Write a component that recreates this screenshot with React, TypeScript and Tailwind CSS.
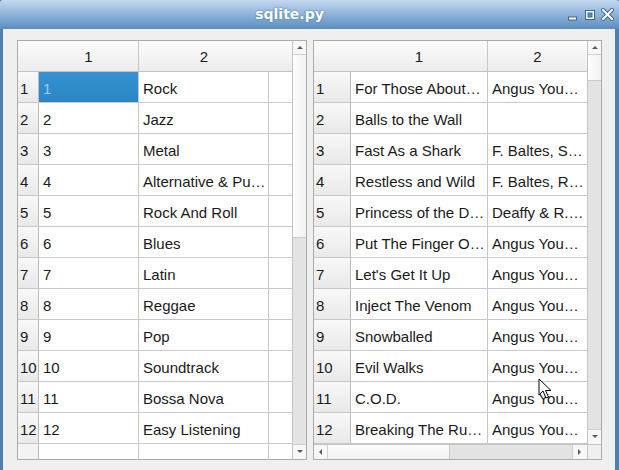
const genres = [
  "Rock",
  "Jazz",
  "Metal",
  "Alternative & Pu…",
  "Rock And Roll",
  "Blues",
  "Latin",
  "Reggae",
  "Pop",
  "Soundtrack",
  "Bossa Nova",
  "Easy Listening",
];

const tracks: [string, string][] = [
  ["For Those About…", "Angus You…"],
  ["Balls to the Wall", ""],
  ["Fast As a Shark", "F. Baltes, S…"],
  ["Restless and Wild", "F. Baltes, R…"],
  ["Princess of the D…", "Deaffy & R.…"],
  ["Put The Finger O…", "Angus You…"],
  ["Let's Get It Up", "Angus You…"],
  ["Inject The Venom", "Angus You…"],
  ["Snowballed", "Angus You…"],
  ["Evil Walks", "Angus You…"],
  ["C.O.D.", "Angus You…"],
  ["Breaking The Ru…", "Angus You…"],
];

function Arrow({ dir }: { dir: "up" | "down" | "left" | "right" }) {
  const pts = {
    up: "1,5 4,2 7,5",
    down: "1,2 4,5 7,2",
    left: "5,1 2,4 5,7",
    right: "2,1 5,4 2,7",
  }[dir];
  return (
    <svg width="8" height="8" viewBox="0 0 8 8">
      <polygon points={pts} fill="#5a5a5a" />
    </svg>
  );
}

function VScroll({ handle }: { handle: number }) {
  return (
    <div className="w-[14px] flex flex-col border-l border-[#c4c4c4] bg-[#e3e3e3]">
      <div className="h-[14px] flex items-center justify-center bg-[#f7f7f7] border-b border-[#d0d0d0]">
        <Arrow dir="up" />
      </div>
      <div
        className="bg-gradient-to-r from-[#fdfdfd] to-[#f1f1f1] border-b border-[#cacaca]"
        style={{ height: handle }}
      />
      <div className="flex-1" />
      <div className="h-[15px] flex items-center justify-center bg-[#f7f7f7] border-t border-[#d0d0d0]">
        <Arrow dir="down" />
      </div>
    </div>
  );
}

function HeaderCell({ w, label, last }: { w: string; label: string; last?: boolean }) {
  return (
    <div
      className={`${w} shrink-0 h-full flex items-center justify-center pt-[3px] ${last ? "" : "border-r border-[#c6c6c6]"}`}
    >
      {label}
    </div>
  );
}

function RowHead({ w, n }: { w: string; n: number }) {
  return (
    <div
      className={`${w} shrink-0 h-full flex items-center pl-[2px] pt-[4px] border-r border-[#bdbdbd] bg-gradient-to-b from-[#f8f8f8] to-[#e9e9e9] whitespace-nowrap`}
    >
      {n}
    </div>
  );
}

function Cell({ w, text, selected }: { w: string; text: string; selected?: boolean }) {
  return (
    <div
      className={`${w} shrink-0 h-full flex items-center pl-[4px] pt-[4px] border-r border-[#c8c8c8] overflow-hidden whitespace-nowrap ${
        selected ? "bg-gradient-to-b from-[#3594d2] to-[#2a85c2] text-[#9fd0f0]" : "bg-white"
      }`}
    >
      {text}
    </div>
  );
}

function LeftTable() {
  return (
    <div className="w-[290px] h-full border border-[#ababab] flex bg-white">
      <div className="flex-1 flex flex-col overflow-hidden">
        <div className="h-[31px] shrink-0 flex bg-gradient-to-b from-[#fbfbfb] to-[#ececec] border-b border-[#c2c2c2]">
          <div className="w-[21px] shrink-0" />
          <HeaderCell w="w-[100px]" label="1" />
          <HeaderCell w="w-[130px]" label="2" last />
        </div>
        {genres.map((g, i) => (
          <div key={i} className="h-[31px] shrink-0 flex border-b border-[#c8c8c8]">
            <RowHead w="w-[21px]" n={i + 1} />
            <Cell w="w-[100px]" text={String(i + 1)} selected={i === 0} />
            <Cell w="w-[130px]" text={g} />
            <div className="flex-1 bg-white" />
          </div>
        ))}
        <div className="flex-1 flex">
          <div className="w-[21px] border-r border-[#bdbdbd] bg-[#f3f3f3]" />
          <div className="w-[100px] border-r border-[#c8c8c8]" />
          <div className="w-[130px] border-r border-[#c8c8c8]" />
        </div>
      </div>
      <VScroll handle={183} />
    </div>
  );
}

function RightTable() {
  return (
    <div className="w-[289px] h-full border border-[#ababab] flex flex-col bg-white">
      <div className="flex-1 flex min-h-0">
        <div className="flex-1 flex flex-col overflow-hidden">
          <div className="h-[31px] shrink-0 flex bg-gradient-to-b from-[#fbfbfb] to-[#ececec] border-b border-[#c2c2c2]">
            <div className="w-[37px] shrink-0" />
            <HeaderCell w="w-[137px]" label="1" />
            <HeaderCell w="w-[99px]" label="2" last />
          </div>
          {tracks.map((t, i) => (
            <div key={i} className="h-[31px] shrink-0 flex border-b border-[#c8c8c8]">
              <RowHead w="w-[37px]" n={i + 1} />
              <Cell w="w-[137px]" text={t[0]} />
              <Cell w="w-[100px]" text={t[1]} />
            </div>
          ))}
        </div>
        <VScroll handle={26} />
      </div>
      <div className="h-[15px] shrink-0 flex border-t border-[#c4c4c4]">
        <div className="flex-1 flex bg-[#e3e3e3]">
          <div className="w-[14px] flex items-center justify-center bg-[#f7f7f7] border-r border-[#d0d0d0]">
            <Arrow dir="left" />
          </div>
          <div className="w-[122px] bg-gradient-to-b from-[#fdfdfd] to-[#f1f1f1] border-r border-[#cacaca]" />
          <div className="flex-1" />
          <div className="w-[15px] flex items-center justify-center bg-[#f7f7f7] border-l border-[#d0d0d0]">
            <Arrow dir="right" />
          </div>
        </div>
        <div className="w-[14px] border-l border-[#c4c4c4] bg-[#efefef]" />
      </div>
    </div>
  );
}

export default function App() {
  return (
    <div
      className="w-[619px] h-[470px] flex flex-col bg-[#4f7fae] text-[15px] text-[#1a1a1a] relative overflow-hidden"
      style={{ fontFamily: '"Liberation Sans", Arial, sans-serif' }}
    >
      {/* title bar */}
      <div className="h-[29px] shrink-0 relative flex items-center justify-center pr-[40px] rounded-t-[3px] bg-gradient-to-b from-[#c4d9ee] via-[#8db3d9] to-[#5b8cbf]">
        <span
          className="text-white font-bold text-[14px] [text-shadow:0_0_2px_#3d6b99]"
          style={{ fontFamily: '"DejaVu Sans", sans-serif' }}
        >
          sqlite.py
        </span>
        <div className="absolute right-[5px] top-[8px] flex items-center gap-[5px]">
          <svg width="12" height="12" viewBox="0 0 12 12">
            <rect x="1.5" y="8" width="8" height="3" fill="#fff" stroke="#3c6590" strokeWidth="1" />
          </svg>
          <svg width="12" height="12" viewBox="0 0 12 12">
            <rect x="1" y="1" width="10" height="10" fill="#3c6590" />
            <rect x="2" y="2" width="8" height="8" fill="#fff" />
            <rect x="4" y="4" width="4" height="4" fill="#5d8ec0" stroke="#3c6590" strokeWidth="1" />
          </svg>
          <svg width="13" height="13" viewBox="0 0 13 13">
            <path d="M2 2 L11 11 M11 2 L2 11" stroke="#3c6590" strokeWidth="4" strokeLinecap="square" />
            <path d="M2 2 L11 11 M11 2 L2 11" stroke="#fff" strokeWidth="2" strokeLinecap="square" />
          </svg>
        </div>
      </div>
      {/* client area */}
      <div className="flex-1 ml-[3px] mr-[4px] mb-[3px] bg-[#efefef] flex gap-[6px] pl-[14px] pt-[11px] pb-[14px]">
        <LeftTable />
        <RightTable />
      </div>
      {/* mouse cursor */}
      <svg className="absolute left-[538px] top-[378px]" width="14" height="22" viewBox="0 0 14 22">
        <path
          d="M1 1 L1 17 L5 13 L8 20 L10.5 19 L7.5 12.5 L13 12.5 Z"
          fill="#ffffff"
          stroke="#000"
          strokeWidth="1"
          strokeLinejoin="round"
        />
      </svg>
    </div>
  );
}
